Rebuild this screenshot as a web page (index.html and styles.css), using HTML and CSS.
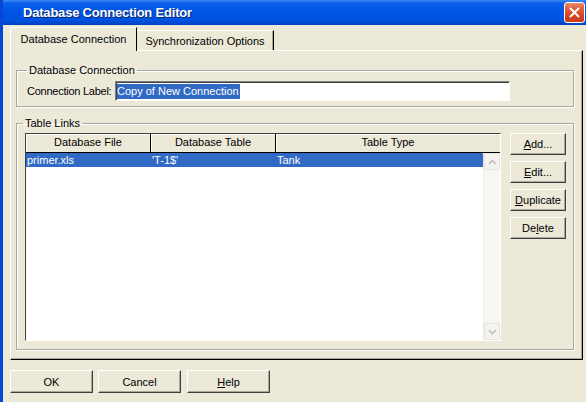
FILE: index.html
```html
<!DOCTYPE html>
<html lang="en">
<head>
  <meta charset="UTF-8">
  <title>Database Connection Editor</title>
  <link rel="stylesheet" href="styles.css">
</head>
<body>
  <div class="window">
    <div class="titlebar">
      <span class="title">Database Connection Editor</span>
      <button class="close" title="Close">
        <svg width="13" height="13" viewBox="0 0 13 13">
          <path d="M2.5 2.5 L10.5 10.5 M10.5 2.5 L2.5 10.5" stroke="#fff" stroke-width="2" stroke-linecap="round"/>
        </svg>
      </button>
    </div>

    <div class="content">
      <div class="tabs">
        <div class="tab active">Database Connection</div>
        <div class="tab">Synchronization Options</div>
      </div>

      <div class="panel">
        <fieldset class="group conn">
          <legend>Database Connection</legend>
          <div class="field">
            <label for="connLabel">Connection Label:</label>
            <div class="textbox" id="connLabel"><span class="sel">Copy of New Connection</span></div>
          </div>
        </fieldset>

        <fieldset class="group links">
          <legend>Table Links</legend>
          <div class="links-body">
            <div class="listview">
              <div class="lv-header">
                <div class="col c1">Database File</div>
                <div class="col c2">Database Table</div>
                <div class="col c3">Table Type</div>
              </div>
              <div class="lv-body">
                <div class="rows">
                  <div class="row selected">
                    <span class="cell c1">primer.xls</span>
                    <span class="cell c2">'T-1$'</span>
                    <span class="cell c3">Tank</span>
                  </div>
                </div>
                <div class="scrollbar">
                  <div class="sb-btn">
                    <svg width="9" height="6" viewBox="0 0 9 6"><path d="M1 5 L4.5 1.5 L8 5" fill="none" stroke="#c3c0b3" stroke-width="1.6"/></svg>
                  </div>
                  <div class="sb-track"></div>
                  <div class="sb-btn">
                    <svg width="9" height="6" viewBox="0 0 9 6"><path d="M1 1 L4.5 4.5 L8 1" fill="none" stroke="#c3c0b3" stroke-width="1.6"/></svg>
                  </div>
                </div>
              </div>
            </div>
            <div class="side-buttons">
              <button class="btn"><u>A</u>dd...</button>
              <button class="btn"><u>E</u>dit...</button>
              <button class="btn"><u>D</u>uplicate</button>
              <button class="btn">De<u>l</u>ete</button>
            </div>
          </div>
        </fieldset>
      </div>

      <div class="footer-buttons">
        <button class="btn wide">OK</button>
        <button class="btn wide">Cancel</button>
        <button class="btn wide"><u>H</u>elp</button>
      </div>
    </div>
  </div>
</body>
</html>
```

FILE: styles.css
```css
body {
  margin: 0;
  background: #ece9d8;
  font-family: "Liberation Sans", Arial, sans-serif;
  font-size: 11px;
  color: #000;
}
.window {
  width: 586px;
  height: 402px;
  box-sizing: border-box;
  border-left: 3px solid #0846d6;
  background: #ece9d8;
  overflow: hidden;
}

/* title bar */
.titlebar {
  height: 25px;
  display: flex;
  align-items: center;
  justify-content: space-between;
  padding: 0 1px 0 20px;
  background: linear-gradient(to bottom, #3f8cf3 0%, #0a5fe9 12%, #0055e5 45%, #0052e0 80%, #0041c4 100%);
}
.title {
  color: #fff;
  font-weight: bold;
  font-size: 13px;
  letter-spacing: -0.2px;
  text-shadow: 1px 1px 0 #0a246a;
}
.close {
  width: 21px;
  height: 21px;
  padding: 0;
  border: 1px solid #fff;
  border-radius: 3px;
  background: linear-gradient(to bottom, #e88a6e 0%, #e05a38 35%, #d6421d 70%, #c83a1c 100%);
  display: flex;
  align-items: center;
  justify-content: center;
}

/* tabs */
.content {
  padding: 2px 3px 0 7px;
}
.tabs {
  display: flex;
  align-items: flex-end;
  height: 23px;
  position: relative;
  z-index: 1;
}
.tab {
  box-sizing: border-box;
  height: 20px;
  padding-top: 4px;
  text-align: center;
  border-top: 1px solid #fff;
  border-right: 1px solid #000;
  background: #ece9d8;
}
.tab.active {
  width: 127px;
  height: 24px;
  margin-bottom: -1px;
  padding-top: 5px;
  border-left: 1px solid #fff;
}
.tab:not(.active) {
  width: 137px;
  box-shadow: inset -1px 0 0 #aca899;
}
.panel {
  box-sizing: border-box;
  height: 310px;
  padding: 13px 8px 0 5px;
  border: 1px solid;
  border-color: #fff #000 #000 #fff;
  box-shadow: inset -1px -1px 0 #aca899;
}

/* group boxes */
.group {
  margin: 0;
  border: 1px solid #aca899;
  box-shadow: inset 1px 1px 0 #fff, 1px 1px 0 #fff;
}
.group legend {
  padding: 0 2px;
  line-height: 13px;
}
.conn {
  padding: 4px 10px 5px 10px;
}
.links {
  margin-top: 10px;
  padding: 3px 7px 8px 8px;
}
.links legend {
  margin-left: -2px;
}

.field {
  display: flex;
  align-items: center;
}
.field label {
  width: 88px;
  flex-shrink: 0;
  white-space: nowrap;
  letter-spacing: -0.25px;
}
.textbox {
  box-sizing: border-box;
  flex-shrink: 0;
  width: 395px;
  height: 20px;
  padding: 2px 1px;
  background: #fff;
  border: 1px solid;
  border-color: #808080 #fff #fff #808080;
  box-shadow: inset 1px 1px 0 #404040;
  line-height: 15px;
  white-space: nowrap;
}
.sel {
  background: #316ac5;
  color: #fff;
  display: inline-block;
  padding-right: 1px;
}

/* list view */
.links-body {
  display: flex;
  gap: 9px;
}
.listview {
  box-sizing: border-box;
  width: 476px;
  height: 208px;
  border: 1px solid;
  border-color: #404040 #fff #fff #404040;
  background: #fff;
  display: flex;
  flex-direction: column;
}
.lv-header {
  display: flex;
  height: 18px;
  border-bottom: 1px solid #000;
  background: #ece9d8;
}
.col {
  box-sizing: border-box;
  text-align: center;
  line-height: 17px;
  border-right: 1px solid #000;
  box-shadow: inset 1px 1px 0 #fff;
}
.c1 { width: 125px; }
.c2 { width: 125px; }
.col.c3 { flex: 1; border-right: none; }
.lv-body {
  flex: 1;
  display: flex;
}
.rows {
  flex: 1;
}
.row {
  display: flex;
  height: 14px;
  line-height: 14px;
}
.row.selected {
  background: #316ac5;
  color: #fff;
}
.cell {
  box-sizing: border-box;
  padding-left: 1px;
}
.cell.c3 { flex: 1; }
.scrollbar {
  width: 16px;
  display: flex;
  flex-direction: column;
  background: #f7f6f2;
  border-left: 1px solid #eeede5;
}
.sb-btn {
  box-sizing: border-box;
  height: 17px;
  display: flex;
  align-items: center;
  justify-content: center;
  border: 1px solid #e8e6dc;
  border-radius: 2px;
  background: #f4f3ee;
}
.sb-track {
  flex: 1;
}

/* buttons */
.side-buttons {
  display: flex;
  flex-direction: column;
  gap: 6px;
}
.btn {
  box-sizing: border-box;
  width: 56px;
  height: 22px;
  padding: 0;
  font-family: inherit;
  font-size: 11px;
  color: #000;
  background: #ece9d8;
  border: 1px solid;
  border-color: #fff #404040 #404040 #fff;
  box-shadow: inset -1px -1px 0 #aca899;
}
.footer-buttons {
  display: flex;
  gap: 5px;
  margin-top: 10px;
}
.btn.wide {
  width: 83px;
  height: 23px;
}
.btn.wide:last-child {
  margin-left: 1px;
}
```
